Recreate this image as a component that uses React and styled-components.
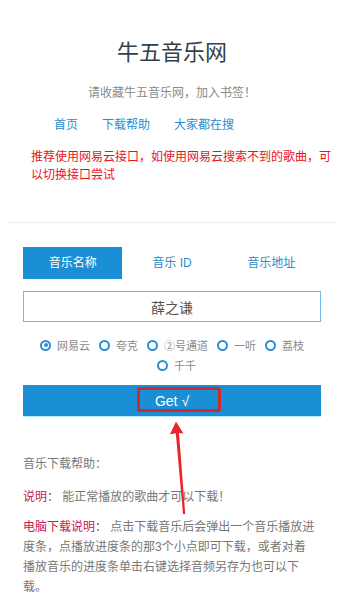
import { useEffect, useRef, useState } from "react";
import styled, { createGlobalStyle } from "styled-components";

const BLUE = "#1a8fd5";

const GlobalStyle = createGlobalStyle`
  * { box-sizing: border-box; }
  body {
    margin: 0;
    background: #fff;
    font-family: "Liberation Sans", "Noto Sans CJK SC", sans-serif;
    font-size: 12px;
    color: #777;
  }
`;

const Page = styled.div`
  position: relative;
  padding: 0 8px;
`;

const Header = styled.header`
  text-align: center;
  padding-top: 38px;
`;

const Title = styled.h1`
  margin: 0;
  font-size: 22px;
  line-height: 30px;
  font-weight: normal;
  color: #353f49;
`;

const Subtitle = styled.p`
  margin: 15px 0 0;
  font-size: 12px;
  line-height: 20px;
  color: #8a8a8a;
`;

const Nav = styled.nav`
  display: flex;
  gap: 24px;
  margin-top: 12px;
  padding-left: 46px;
  line-height: 20px;
`;

const NavLink = styled.a`
  color: #2a8dcb;
  text-decoration: none;
  font-size: 12px;
`;

const Notice = styled.p`
  margin: 13px 0 0;
  padding-left: 23px;
  text-align: left;
  font-size: 12px;
  line-height: 18px;
  color: #e5141c;
`;

const Divider = styled.hr`
  height: 0;
  margin: 38px 0 0;
  border: 0;
  border-top: 1px solid #ececec;
`;

const Main = styled.section`
  padding: 24px 15px 0;
`;

const Tabs = styled.div`
  display: grid;
  grid-template-columns: repeat(3, 1fr);
`;

const Tab = styled.div`
  height: 32px;
  line-height: 32px;
  text-align: center;
  font-size: 12px;
  cursor: pointer;
  background: ${(p) => (p.$active ? BLUE : "transparent")};
  color: ${(p) => (p.$active ? "#fff" : "#2a8dcb")};
`;

const SearchInput = styled.input`
  display: block;
  width: 100%;
  height: 31px;
  margin-top: 12px;
  border: 1px solid #6fb9e8;
  outline: none;
  text-align: center;
  font-family: inherit;
  font-size: 14px;
  color: #555;
  background: #fff;
`;

const Radios = styled.div`
  display: flex;
  flex-wrap: wrap;
  justify-content: center;
  margin-top: 13px;
`;

const RadioItem = styled.label`
  display: inline-flex;
  align-items: center;
  gap: 6px;
  height: 20px;
  font-size: 11px;
  color: #8a8a8a;
  cursor: pointer;

  & + & {
    margin-left: 9px;
  }
`;

const RadioDot = styled.span`
  position: relative;
  width: 11px;
  height: 11px;
  border: 2px solid #2a8fd4;
  border-radius: 50%;
  background: #fff;

  &::after {
    content: "";
    display: ${(p) => (p.$checked ? "block" : "none")};
    position: absolute;
    left: 1.5px;
    top: 1.5px;
    width: 4px;
    height: 4px;
    border-radius: 50%;
    background: #2a8fd4;
  }
`;

const GetButton = styled.button`
  position: relative;
  display: block;
  width: 100%;
  height: 31px;
  margin-top: 10px;
  border: 0;
  background: ${BLUE};
  box-shadow: 0 1px 0 #b7eafa;
  color: #fff;
  font-family: "Liberation Sans", Arial, sans-serif;
  font-size: 14px;
  line-height: 31px;
  cursor: pointer;
`;

// annotation box drawn over the button
const Highlight = styled.span`
  position: absolute;
  left: 114px;
  top: 2px;
  width: 84px;
  height: 25px;
  border: 3px solid #cc2a30;
  border-radius: 3px;
`;

const Help = styled.div`
  margin-top: 38px;
  padding-right: 5px;
`;

const HelpPara = styled.p`
  margin: 0 0 ${(p) => p.$gap || 10}px;
  font-size: 12px;
  line-height: 20px;
  color: #777;
`;

const Label = styled.span`
  color: #c5204e;
`;

const Arrow = styled.svg`
  position: absolute;
  left: 160px;
  top: 415px;
  width: 40px;
  height: 105px;
  pointer-events: none;
`;

const sources = ["网易云", "夸克", "②号通道", "一听", "荔枝", "千千"];
const tabs = ["音乐名称", "音乐 ID", "音乐地址"];

export default function App() {
  const [tab, setTab] = useState(0);
  const [source, setSource] = useState(0);
  const [query, setQuery] = useState("薛之谦");
  const inputRef = useRef(null);

  useEffect(() => {
    const el = inputRef.current;
    if (el) {
      el.focus();
      el.setSelectionRange(el.value.length, el.value.length);
    }
  }, []);

  return (
    <Page>
      <GlobalStyle />
      <Header>
        <Title>牛五音乐网</Title>
        <Subtitle>请收藏牛五音乐网，加入书签！</Subtitle>
      </Header>
      <Nav>
        <NavLink href="#">首页</NavLink>
        <NavLink href="#">下载帮助</NavLink>
        <NavLink href="#">大家都在搜</NavLink>
      </Nav>
      <Notice>
        推荐使用网易云接口，如使用网易云搜索不到的歌曲，可以切换接口尝试
      </Notice>
      <Divider />

      <Main>
        <Tabs>
          {tabs.map((t, i) => (
            <Tab key={t} $active={tab === i} onClick={() => setTab(i)}>
              {t}
            </Tab>
          ))}
        </Tabs>
        <SearchInput
          ref={inputRef}
          value={query}
          onChange={(e) => setQuery(e.target.value)}
        />
        <Radios>
          {sources.map((s, i) => (
            <RadioItem key={s} onClick={() => setSource(i)}>
              <RadioDot $checked={source === i} />
              {s}
            </RadioItem>
          ))}
        </Radios>
        <GetButton>
          Get √
          <Highlight />
        </GetButton>

        <Help>
          <HelpPara $gap={13}>音乐下载帮助：</HelpPara>
          <HelpPara>
            <Label>说明：</Label> 能正常播放的歌曲才可以下载！
          </HelpPara>
          <HelpPara $gap={0}>
            <Label>电脑下载说明：</Label>{" "}
            点击下载音乐后会弹出一个音乐播放进度条，点播放进度条的那3个小点即可下载，或者对着播放音乐的进度条单击右键选择音频另存为也可以下载。
          </HelpPara>
        </Help>
      </Main>

      <Arrow viewBox="160 415 40 105">
        <polygon
          points="176,421.5 183.5,433.5 179,433 185.2,514 183,514 175.8,433.2 170,434.3"
          fill="#e8262a"
        />
      </Arrow>
    </Page>
  );
}
